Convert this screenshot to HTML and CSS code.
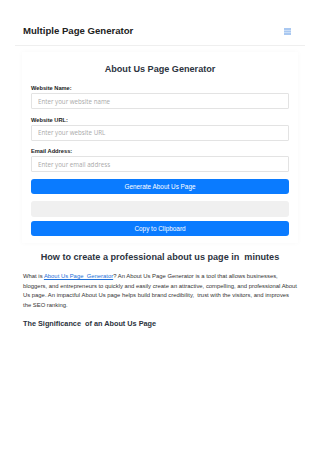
FILE: index.html
```html
<!DOCTYPE html>
<html lang="en">
<head>
<meta charset="utf-8">
<title>About Us Page Generator</title>
<link rel="stylesheet" href="styles.css">
</head>
<body>
<header class="site-header">
  <div class="brand">Multiple Page Generator</div>
  <button class="menu-toggle" aria-label="Menu">
    <svg viewBox="0 0 7 7" width="7" height="7" aria-hidden="true">
      <rect x="0" y="0" width="7" height="2.1" fill="#a9c8f1"/>
      <rect x="0" y="2.45" width="7" height="2.1" fill="#a9c8f1"/>
      <rect x="0" y="4.9" width="7" height="2.1" fill="#a9c8f1"/>
    </svg>
  </button>
</header>
<main class="main">
  <section class="card">
    <h1 class="card-title">About Us Page Generator</h1>
    <div class="field">
      <label class="field-label">Website Name:</label>
      <input class="field-input" type="text" placeholder="Enter your website name">
    </div>
    <div class="field">
      <label class="field-label">Website URL:</label>
      <input class="field-input" type="text" placeholder="Enter your website URL">
    </div>
    <div class="field">
      <label class="field-label">Email Address:</label>
      <input class="field-input" type="text" placeholder="Enter your email address">
    </div>
    <button class="btn btn-generate">Generate About Us Page</button>
    <div class="output"></div>
    <button class="btn btn-copy">Copy to Clipboard</button>
  </section>
  <h2 class="article-title">How to create a professional about us page in&nbsp; minutes</h2>
  <p class="article-text">What is <a href="#" class="article-link">About Us Page&nbsp; Generator</a>? An About Us Page Generator is a tool that allows businesses, bloggers, and entrepreneurs to quickly and easily create an attractive, compelling, and professional About Us page. An impactful About Us page helps build brand credibility,&nbsp; trust with the visitors, and improves the SEO ranking.</p>
  <h3 class="article-subtitle">The Significance&nbsp; of an About Us Page</h3>
</main>
</body>
</html>
```
FILE: styles.css
```css
html, body {
  margin: 0;
  padding: 0;
  background: #ffffff;
}
body {
  font-family: "Liberation Sans", Arial, sans-serif;
  color: #333;
}
.site-header {
  margin: 0 15px;
  padding: 25px 8px 8px;
  border-bottom: 1px solid #efefef;
  display: flex;
  align-items: center;
  justify-content: space-between;
}
.brand {
  font-size: 9.6px;
  line-height: 12px;
  font-weight: bold;
  color: #222;
}
.menu-toggle {
  border: 0;
  background: none;
  padding: 0;
  margin-right: 6px;
  width: 7px;
  height: 7px;
  display: flex;
}
.main {
  padding: 0 22px;
}
.card {
  margin-top: 6px;
  padding: 11px 9px 7px;
  box-shadow: 0 0 5px rgba(0, 0, 0, 0.03);
  display: flex;
  flex-direction: column;
}
.card-title {
  margin: 0 0 10px;
  text-align: center;
  font-size: 9.1px;
  line-height: 12px;
  font-weight: bold;
  color: #2c3340;
}
.field {
  display: flex;
  flex-direction: column;
  margin-bottom: 7.5px;
}
.field-label {
  font-size: 5.7px;
  line-height: 7px;
  font-weight: bold;
  color: #222;
  margin-bottom: 1px;
}
.field-input {
  box-sizing: border-box;
  height: 16px;
  margin: 0;
  padding: 0 6px;
  border: 1px solid #e3e3e3;
  border-radius: 1px;
  font-family: "Open Sans", sans-serif;
  font-size: 6.2px;
  color: #333;
  outline: none;
}
.field-input::placeholder {
  color: #a9a9a9;
}
.btn {
  box-sizing: border-box;
  height: 15px;
  border: 0;
  border-radius: 3px;
  background: #0a7bff;
  color: #fff;
  font-family: "Liberation Sans", Arial, sans-serif;
  font-size: 6.4px;
  padding: 0;
}
.btn-generate {
  margin-top: -1px;
}
.output {
  margin-top: 7.5px;
  height: 16px;
  border-radius: 3px;
  background: #f0f0f0;
}
.btn-copy {
  margin-top: 4px;
}
.article-title {
  margin: 8px 0 9px;
  text-align: center;
  font-size: 9.1px;
  line-height: 12px;
  font-weight: bold;
  color: #2c3340;
}
.article-text {
  margin: 0 0 8.7px;
  padding-left: 1px;
  font-size: 5.88px;
  line-height: 9.6px;
  color: #333;
}
.article-link {
  color: #1d6fd8;
  text-decoration: underline;
}
.article-subtitle {
  margin: 0;
  padding-left: 1px;
  font-size: 7.3px;
  line-height: 10px;
  font-weight: bold;
  color: #2c3340;
}
```
